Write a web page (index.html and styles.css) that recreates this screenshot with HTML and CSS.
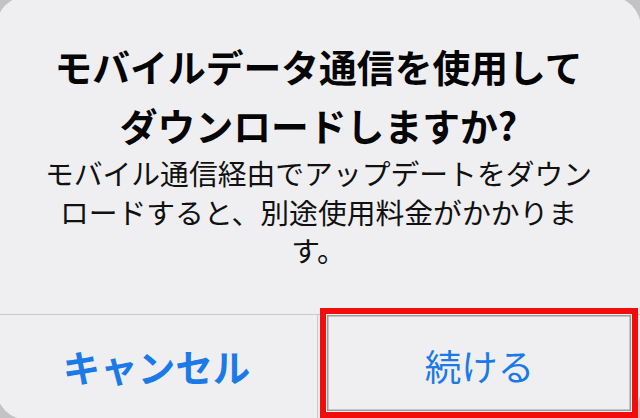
FILE: index.html
```html
<!DOCTYPE html>
<html lang="ja">
<head>
    <meta charset="UTF-8">
    <title>モバイルデータ通信</title>
    <link rel="stylesheet" href="styles.css">
</head>
<body>
    <div class="alert">
        <div class="alert-body">
            <h1 class="alert-title">モバイルデータ通信を使用してダウンロードしますか?</h1>
            <p class="alert-message">モバイル通信経由でアップデートをダウンロードすると、別途使用料金がかかります。</p>
        </div>
        <div class="alert-actions">
            <div class="alert-btn cancel">キャンセル</div>
            <div class="alert-btn confirm">
                続ける
                <span class="mark"></span>
            </div>
        </div>
    </div>
</body>
</html>
```

FILE: styles.css
```css
* {
    margin: 0;
    padding: 0;
    box-sizing: border-box;
}
html, body {
    width: 640px;
    height: 418px;
    overflow: hidden;
}
body {
    background-color: #c3c3c5;
    font-family: "Noto Sans CJK JP", "Noto Sans", sans-serif;
}
.alert {
    width: 645px;
    height: 424px;
    margin: -4px 0 0 -4px;
    background-color: #efeff1;
    border-radius: 32px;
    display: flex;
    flex-direction: column;
}
.alert-body {
    flex: 1;
    padding: 40px 48px 0;
    text-align: center;
}
.alert-title {
    font-size: 37.8px;
    font-weight: 700;
    line-height: 59px;
    color: #050505;
}
.alert-message {
    font-size: 28.8px;
    font-weight: 400;
    line-height: 38.5px;
    color: #111;
}
.alert-actions {
    height: 106px;
    border-top: 1.5px solid #c9c9cc;
    display: flex;
}
.alert-btn {
    display: flex;
    align-items: center;
    justify-content: center;
    color: #1b7ae8;
    font-size: 37.5px;
    padding-bottom: 4px;
}
.cancel {
    width: 322px;
    font-weight: 700;
    border-right: 1.5px solid #c9c9cc;
}
.confirm {
    flex: 1;
    position: relative;
    font-weight: 400;
    font-size: 36.5px;
}
.mark {
    position: absolute;
    top: -7px;
    left: 2px;
    right: 3px;
    bottom: 2px;
    border: 6px solid #f20d0d;
    box-shadow: inset 0 0 0 1px #f7eeee, inset 0 0 0 2.5px #9c9c9c;
}
```
